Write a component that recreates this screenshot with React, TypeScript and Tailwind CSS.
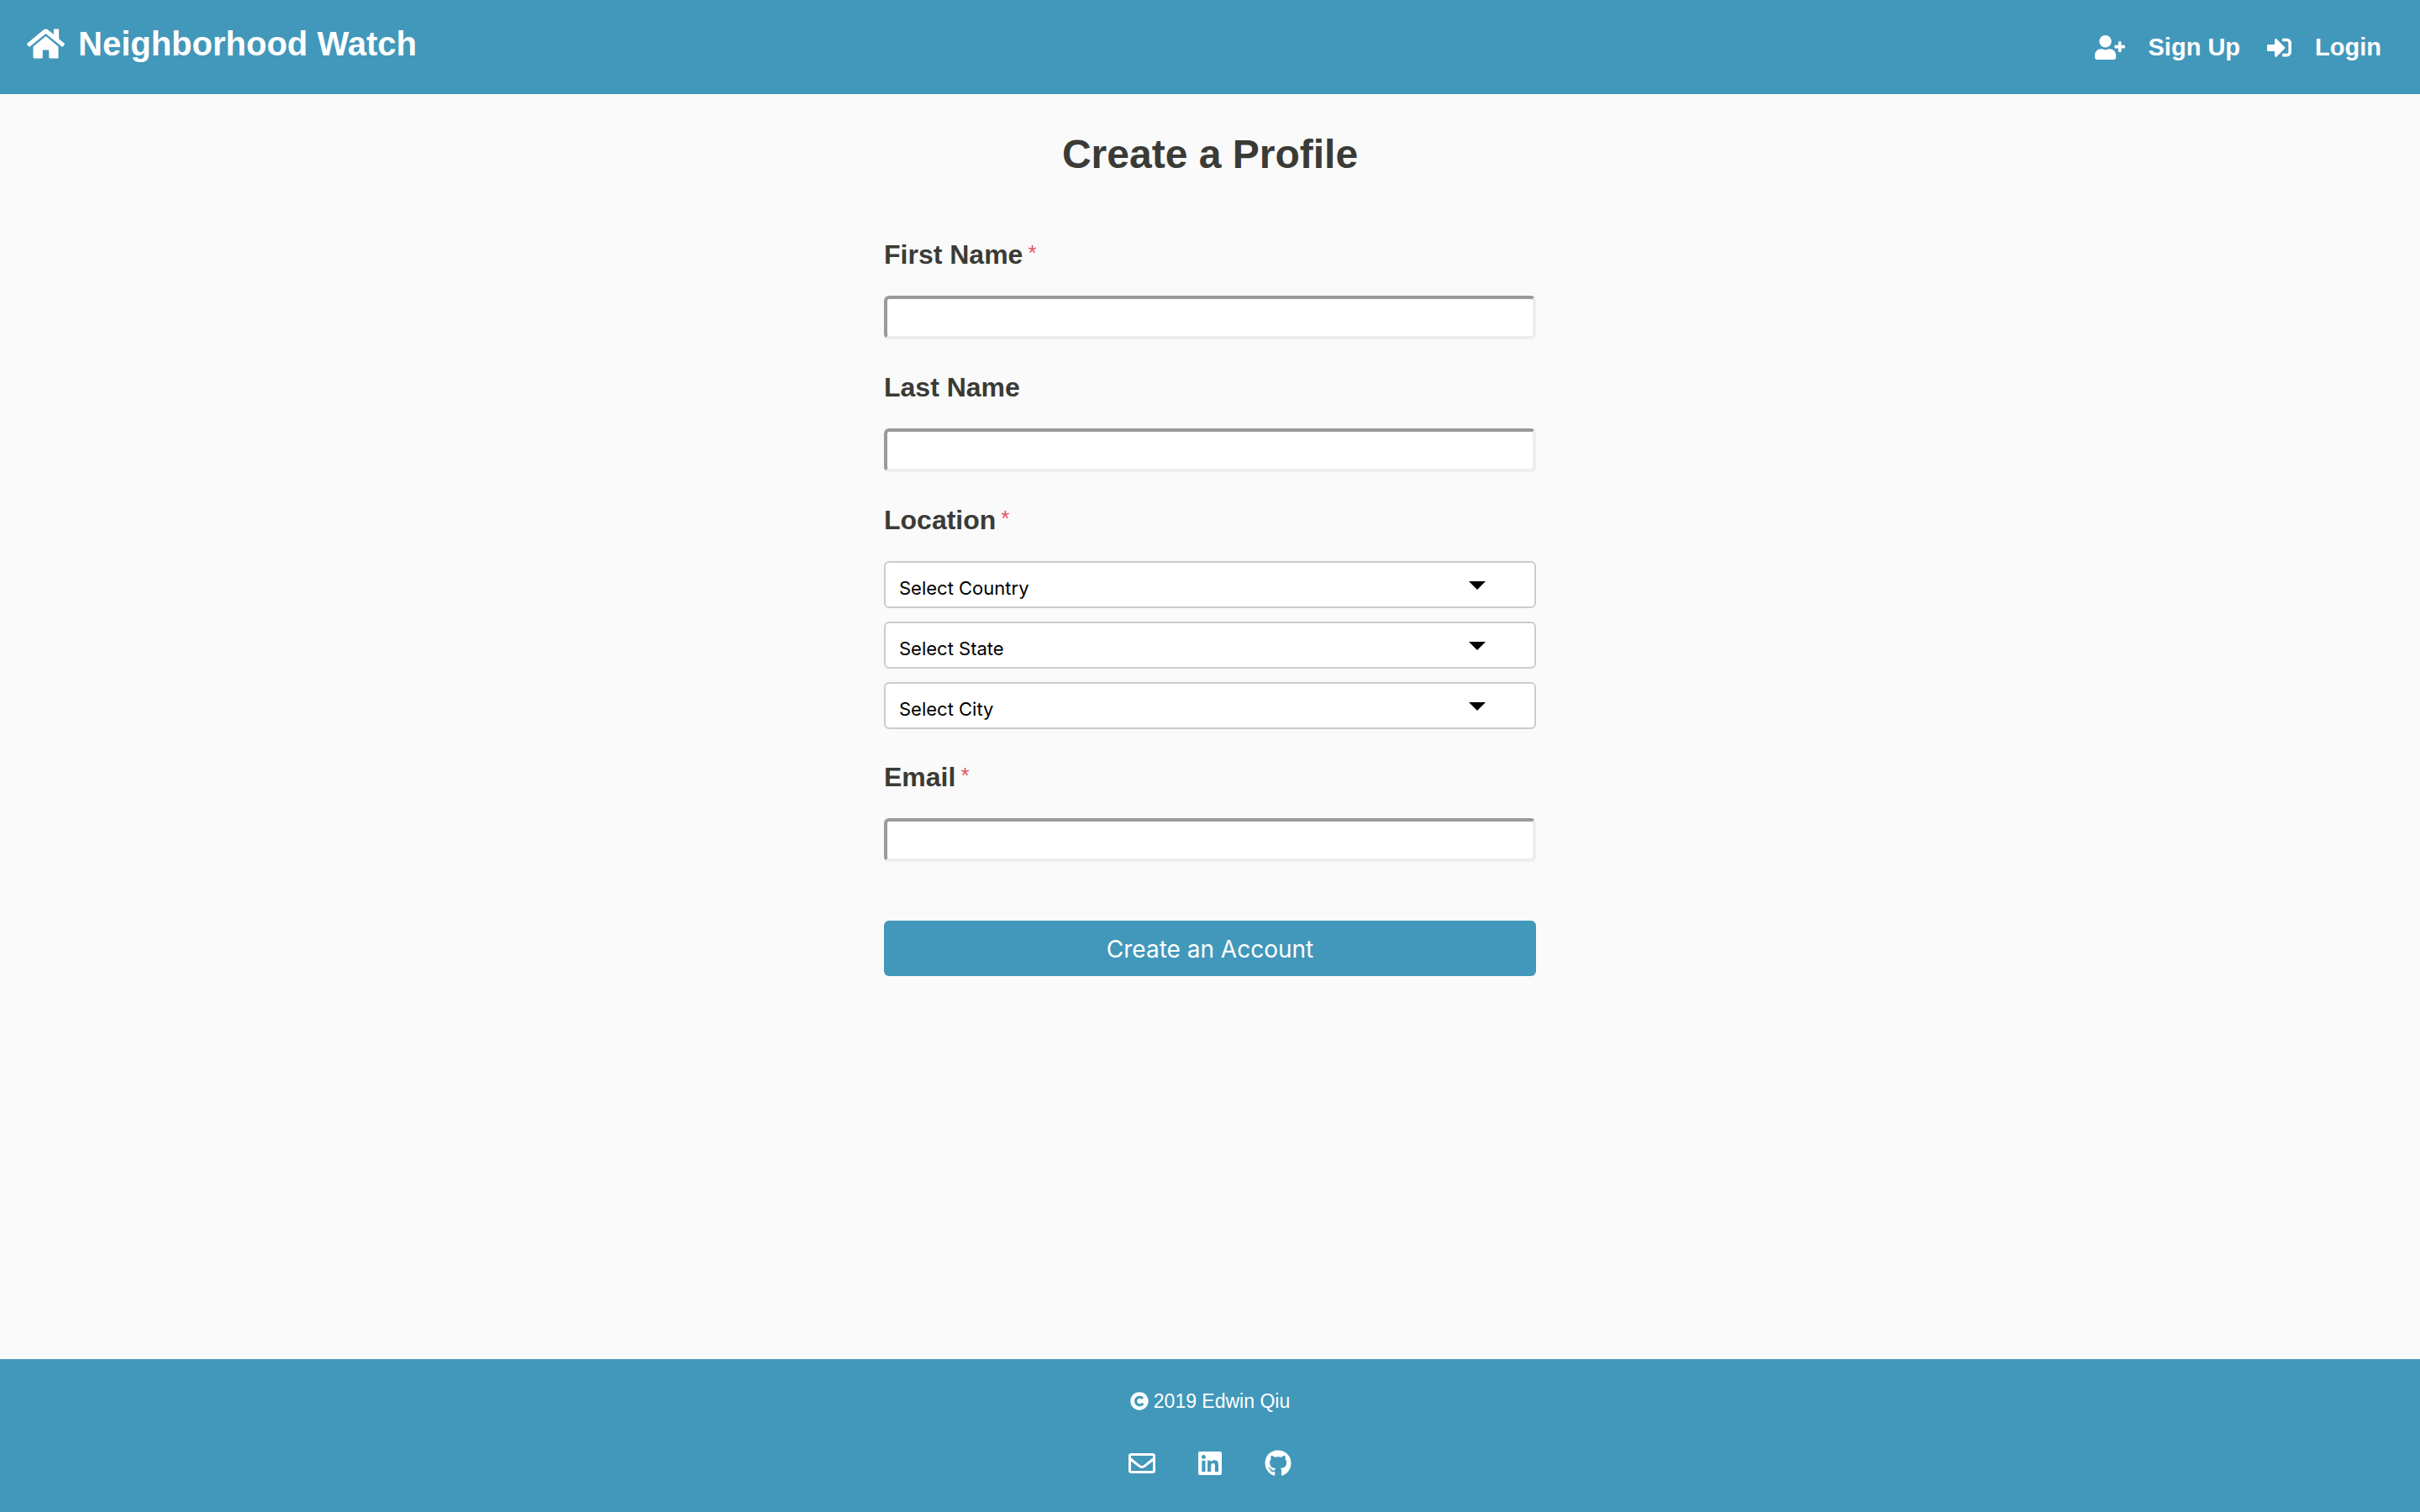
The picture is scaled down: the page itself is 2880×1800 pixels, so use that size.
import type { ReactNode } from "react";
import {
  FaCopyright,
  FaGithub,
  FaHome,
  FaLinkedin,
  FaRegEnvelope,
  FaSignInAlt,
  FaUserPlus,
} from "react-icons/fa";

function Required() {
  return (
    <span className="ml-1.5 align-[4px] text-[26px] leading-none font-normal text-[#e05565]">
      *
    </span>
  );
}

const labelClass = "mb-7 block text-[32px] leading-[42px] font-bold";

function TextField({
  id,
  label,
  type = "text",
  required = false,
}: {
  id: string;
  label: string;
  type?: string;
  required?: boolean;
}) {
  return (
    <div>
      <label htmlFor={id} className={labelClass}>
        {label}
        {required && <Required />}
      </label>
      <input
        id={id}
        type={type}
        required={required}
        className="block h-[52px] w-full rounded-md border-4 border-t-[#9a9a9a] border-r-[#eeeeee] border-b-[#eeeeee] border-l-[#9a9a9a] bg-white px-2 text-[22px] outline-none"
      />
    </div>
  );
}

function SelectField({ label }: { label: string }) {
  return (
    <div className="relative">
      <select
        aria-label={label}
        className="block h-14 w-full appearance-none rounded-md border-2 border-[#cccccc] bg-white pt-2 pr-20 pl-4 font-['Inter',sans-serif] text-[22px] text-black outline-none"
      >
        <option>{label}</option>
      </select>
      <svg
        viewBox="0 0 20 10"
        className="pointer-events-none absolute top-6 right-[60px] h-[10px] w-5"
        aria-hidden="true"
      >
        <path d="M0 0h20L10 10z" fill="#000" />
      </svg>
    </div>
  );
}

function NavLink({ icon, children }: { icon: ReactNode; children: ReactNode }) {
  return (
    <a href="#" className="flex items-center gap-7">
      {icon}
      {children}
    </a>
  );
}

export default function App() {
  return (
    <div className="flex min-h-screen flex-col bg-[#fafafa] font-['Liberation_Sans',Arial,sans-serif] text-[#3a3b37] antialiased">
      <header className="flex h-28 items-center justify-between bg-[#4298ba] pr-[46px] pl-8 text-white">
        <a href="#" className="flex items-center gap-4 pb-2 text-[40px] leading-12 font-bold">
          <FaHome className="h-10 w-[45px]" />
          Neighborhood Watch
        </a>
        <nav className="flex items-center gap-8 text-[29px] leading-9 font-bold">
          <NavLink icon={<FaUserPlus className="h-[29px] w-9" />}>Sign Up</NavLink>
          <NavLink icon={<FaSignInAlt className="size-[29px]" />}>Login</NavLink>
        </nav>
      </header>

      <main className="mx-auto w-full max-w-[776px] pt-11">
        <h1 className="mb-[70px] text-center text-[48px] leading-14 font-bold">Create a Profile</h1>
        <form className="flex flex-col gap-9">
          <TextField id="first-name" label="First Name" required />
          <TextField id="last-name" label="Last Name" />
          <fieldset>
            <legend className={labelClass}>
              Location
              <Required />
            </legend>
            <div className="flex flex-col gap-4">
              <SelectField label="Select Country" />
              <SelectField label="Select State" />
              <SelectField label="Select City" />
            </div>
          </fieldset>
          <TextField id="email" label="Email" type="email" required />
          <button
            type="submit"
            className="mt-[34px] h-[66px] w-full rounded-md bg-[#4298ba] pt-0.5 font-['Inter',sans-serif] text-[28px] text-white"
          >
            Create an Account
          </button>
        </form>
      </main>

      <footer className="mt-auto flex flex-col items-center gap-[42px] bg-[#4298ba] pt-[34px] pb-[42px] text-white">
        <p className="flex items-center gap-1.5 text-[23px] leading-8">
          <FaCopyright className="size-[22px]" />
          2019 Edwin Qiu
        </p>
        <div className="flex items-center gap-[51px]">
          <a href="#" aria-label="Email">
            <FaRegEnvelope className="size-8" />
          </a>
          <a href="#" aria-label="LinkedIn">
            <FaLinkedin className="h-8 w-7" />
          </a>
          <a href="#" aria-label="GitHub">
            <FaGithub className="size-8" />
          </a>
        </div>
      </footer>
    </div>
  );
}
